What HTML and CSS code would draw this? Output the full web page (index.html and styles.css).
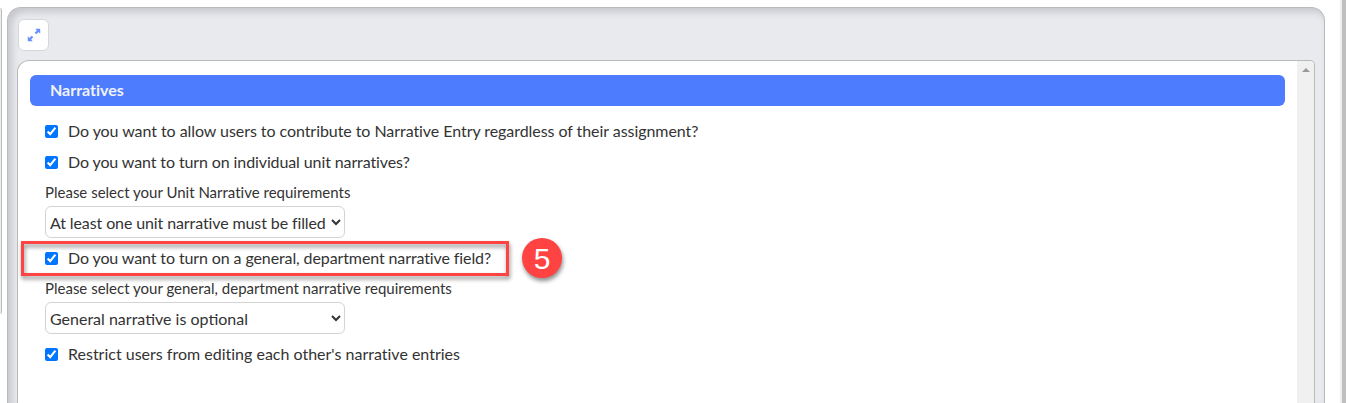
FILE: index.html
```html
<!DOCTYPE html>
<html lang="en">
<head>
    <meta charset="UTF-8">
    <meta name="viewport" content="width=device-width, initial-scale=1.0">
    <title>Narratives</title>
    <link rel="stylesheet" href="styles.css">
</head>
<body>
    <div class="side-panel"></div>
    <main class="panel">
        <button type="button" class="expand-button" aria-label="Expand">
            <svg width="14" height="14" viewBox="0 0 14 14">
                <path d="M8.2 0.8H13.2V5.8L11.5 4.1L9.3 6.3L7.7 4.7L9.9 2.5Z"/>
                <path d="M5.8 13.2H0.8V8.2L2.5 9.9L4.7 7.7L6.3 9.3L4.1 11.5Z"/>
            </svg>
        </button>
        <div class="content">
            <form class="settings">
                <h2>Narratives</h2>
                <div class="fields">
                    <label class="check snug"><input type="checkbox" checked><span>Do you want to allow users to contribute to Narrative Entry regardless of their assignment?</span></label>
                    <label class="check tight"><input type="checkbox" checked><span>Do you want to turn on individual unit narratives?</span></label>

                    <label class="caption" for="unitRequirement">Please select your Unit Narrative requirements</label>
                    <select id="unitRequirement" class="tight">
                        <option>At least one unit narrative must be filled</option>
                    </select>

                    <div class="marked">
                        <label class="check tight"><input type="checkbox" checked><span>Do you want to turn on a general, department narrative field?</span></label>
                        <div class="outline"></div>
                        <div class="step">5</div>
                    </div>

                    <label class="caption" for="generalRequirement">Please select your general, department narrative requirements</label>
                    <select id="generalRequirement">
                        <option>General narrative is optional</option>
                    </select>

                    <label class="check"><input type="checkbox" checked><span>Restrict users from editing each other's narrative entries</span></label>
                </div>
            </form>
            <div class="scrollbar">
                <div class="arrow-up"></div>
            </div>
        </div>
    </main>
    <div class="window-edge"></div>
</body>
</html>
```

FILE: styles.css
```css
* {
    box-sizing: border-box;
}
body {
    display: flex;
    height: 403px;
    margin: 0;
    overflow: hidden;
    background-color: #fff;
    color: #333;
    font-family: Lato, sans-serif;
    font-size: 16px;
    font-variant-ligatures: none;
}
.side-panel {
    width: 2px;
    height: 306px;
    margin: 8px 5px 0 0;
    border-right: 1px solid #bbb;
    border-radius: 0 6px 6px 0;
    background-color: #eee;
}
.panel {
    display: flex;
    flex-direction: column;
    width: 1318px;
    height: 396px;
    margin-top: 7px;
    padding: 11px 9px 0;
    border: 1px solid #b9babd;
    border-bottom: 0;
    border-radius: 14px 14px 0 0;
    background-color: #e8eaee;
    box-shadow: inset 4px 4px 7px #c6c7cd;
}
.expand-button {
    display: flex;
    align-items: center;
    justify-content: center;
    flex: none;
    width: 31px;
    height: 32px;
    margin: 0 0 9px 1px;
    padding: 0;
    border: 1px solid #d5d7db;
    border-radius: 6px;
    background-color: #fff;
}
.expand-button svg {
    fill: #6690ff;
}
.content {
    display: flex;
    flex: 1;
    border: 1px solid #b9b9b9;
    border-bottom: 0;
    border-radius: 12px 5px 0 0;
    background-color: #fff;
}
.settings {
    flex: 1;
    padding: 14px 12px 0;
}
h2 {
    height: 31px;
    margin: 0 0 10px;
    padding-left: 20px;
    border-radius: 6px;
    background-color: #4d7cff;
    color: #f0f2fa;
    font-size: 16px;
    line-height: 29px;
}
.fields {
    display: flex;
    flex-direction: column;
    align-items: flex-start;
    padding-left: 15px;
}
.check {
    display: flex;
    align-items: center;
    height: 31px;
}
.check input {
    width: 13px;
    height: 13px;
    margin: 0 10px 0 0;
}
.check span {
    margin-bottom: 2px;
}
.caption {
    height: 28px;
    font-size: 15px;
    line-height: 28px;
}
select {
    width: 300px;
    height: 32px;
    margin-bottom: 5px;
    border: 1px solid #d3d3d3;
    border-radius: 6px;
    background-color: #fff;
    color: #333;
    font-family: inherit;
    font-size: 16px;
}
.snug {
    letter-spacing: -0.06px;
}
.tight {
    letter-spacing: -0.11px;
}
.marked {
    position: relative;
}
/* Callout drawn over the form row */
.outline {
    position: absolute;
    top: -2px;
    left: -24px;
    width: 488px;
    height: 35px;
    border: 3px solid #ff4343;
    filter: drop-shadow(1px 3px 2px rgba(0, 0, 0, 0.45));
    pointer-events: none;
}
.step {
    position: absolute;
    top: -5px;
    left: 477px;
    width: 40px;
    height: 40px;
    border-radius: 50%;
    background-color: #ff4343;
    box-shadow: 1px 3px 4px rgba(0, 0, 0, 0.45);
    color: #fff;
    font-family: "Liberation Sans", Arial, sans-serif;
    font-size: 30px;
    line-height: 41px;
    letter-spacing: 0;
    text-align: center;
}
.scrollbar {
    width: 17px;
    padding: 7px 0 0 5px;
    border-radius: 0 4px 0 0;
    background-color: #f0f0f0;
}
.arrow-up {
    width: 8px;
    border: 4px solid transparent;
    border-top: 0;
    border-bottom-color: #999;
}
.window-edge {
    width: 6px;
    margin-left: auto;
    border-left: 2px solid #eee;
    background-color: #bfbfbf;
}
```
